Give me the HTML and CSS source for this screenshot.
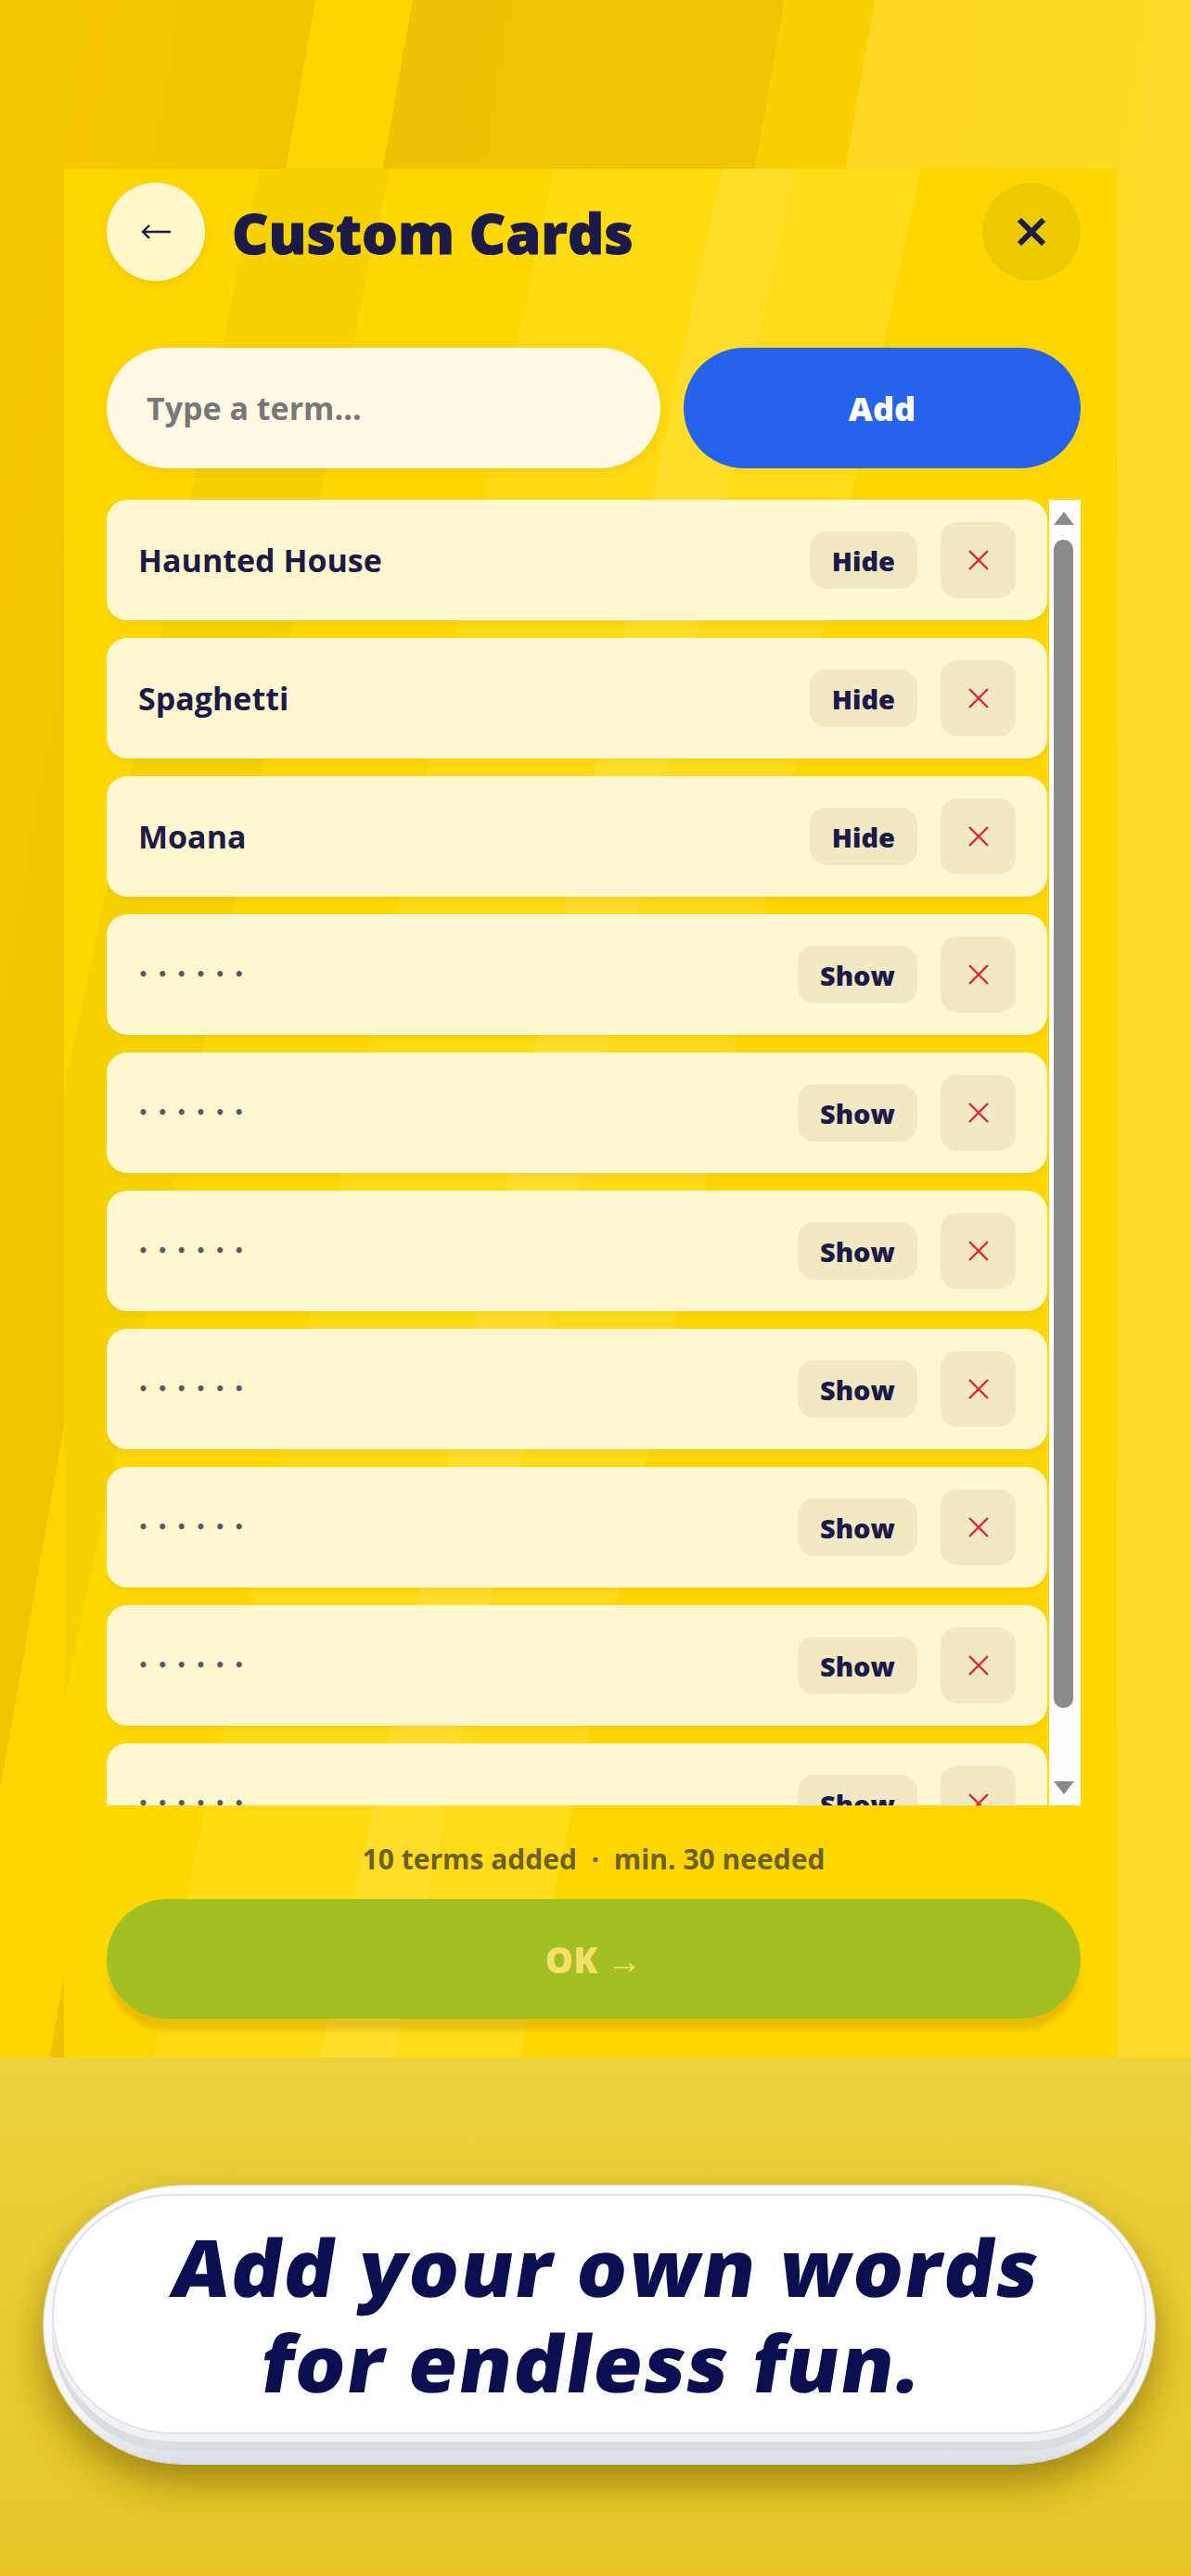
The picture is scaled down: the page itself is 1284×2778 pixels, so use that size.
FILE: index.html
```
<!DOCTYPE html>
<html lang="en">
<head>
  <meta charset="UTF-8" />
  <meta name="viewport" content="width=device-width, initial-scale=1.0"/>
  <title>Custom Cards</title>
  <link rel="stylesheet" href="styles.css">
</head>
<body>
  <section class="shot">
    <div class="panel">
      <header class="panel-head">
        <button class="round-btn back-btn" title="Back">
          <svg width="34" height="16" viewBox="0 0 34 16"><path d="M33 8H3M10 1L3 8l7 7" fill="none" stroke="#1c1b47" stroke-width="2.4"/></svg>
        </button>
        <h1 class="title">Custom Cards</h1>
        <button class="round-btn close-btn" title="Close">
          <svg width="34" height="34" viewBox="0 0 34 34"><path d="M4 4l26 26M30 4L4 30" stroke="#1c1b47" stroke-width="6"/></svg>
        </button>
      </header>

      <form class="add-row" autocomplete="off">
        <input class="term-input" type="text" placeholder="Type a term...">
        <button type="button" class="add-btn">Add</button>
      </form>

      <div class="list-wrap">
        <ul class="term-list">
          <li class="term-row"><span class="term-text">Haunted House</span><button class="toggle-btn">Hide</button><button class="del-btn"><svg width="24" height="24" viewBox="0 0 24 24"><path d="M2 2l20 20M22 2L2 22" stroke="#e0262b" stroke-width="2.4"/></svg></button></li>
          <li class="term-row"><span class="term-text">Spaghetti</span><button class="toggle-btn">Hide</button><button class="del-btn"><svg width="24" height="24" viewBox="0 0 24 24"><path d="M2 2l20 20M22 2L2 22" stroke="#e0262b" stroke-width="2.4"/></svg></button></li>
          <li class="term-row"><span class="term-text">Moana</span><button class="toggle-btn">Hide</button><button class="del-btn"><svg width="24" height="24" viewBox="0 0 24 24"><path d="M2 2l20 20M22 2L2 22" stroke="#e0262b" stroke-width="2.4"/></svg></button></li>
          <li class="term-row"><span class="term-text hidden">••••••</span><button class="toggle-btn">Show</button><button class="del-btn"><svg width="24" height="24" viewBox="0 0 24 24"><path d="M2 2l20 20M22 2L2 22" stroke="#e0262b" stroke-width="2.4"/></svg></button></li>
          <li class="term-row"><span class="term-text hidden">••••••</span><button class="toggle-btn">Show</button><button class="del-btn"><svg width="24" height="24" viewBox="0 0 24 24"><path d="M2 2l20 20M22 2L2 22" stroke="#e0262b" stroke-width="2.4"/></svg></button></li>
          <li class="term-row"><span class="term-text hidden">••••••</span><button class="toggle-btn">Show</button><button class="del-btn"><svg width="24" height="24" viewBox="0 0 24 24"><path d="M2 2l20 20M22 2L2 22" stroke="#e0262b" stroke-width="2.4"/></svg></button></li>
          <li class="term-row"><span class="term-text hidden">••••••</span><button class="toggle-btn">Show</button><button class="del-btn"><svg width="24" height="24" viewBox="0 0 24 24"><path d="M2 2l20 20M22 2L2 22" stroke="#e0262b" stroke-width="2.4"/></svg></button></li>
          <li class="term-row"><span class="term-text hidden">••••••</span><button class="toggle-btn">Show</button><button class="del-btn"><svg width="24" height="24" viewBox="0 0 24 24"><path d="M2 2l20 20M22 2L2 22" stroke="#e0262b" stroke-width="2.4"/></svg></button></li>
          <li class="term-row"><span class="term-text hidden">••••••</span><button class="toggle-btn">Show</button><button class="del-btn"><svg width="24" height="24" viewBox="0 0 24 24"><path d="M2 2l20 20M22 2L2 22" stroke="#e0262b" stroke-width="2.4"/></svg></button></li>
          <li class="term-row"><span class="term-text hidden">••••••</span><button class="toggle-btn">Show</button><button class="del-btn"><svg width="24" height="24" viewBox="0 0 24 24"><path d="M2 2l20 20M22 2L2 22" stroke="#e0262b" stroke-width="2.4"/></svg></button></li>
        </ul>
        <div class="scrollbar">
          <span class="sb-arrow up"></span>
          <span class="sb-thumb"></span>
          <span class="sb-arrow down"></span>
        </div>
      </div>

      <p class="count">10 terms added &nbsp;·&nbsp; min. 30 needed</p>
      <button class="ok-btn">OK →</button>
    </div>
  </section>

  <section class="promo">
    <div class="plate">
      <div class="plate-face">
        <p class="promo-text">Add your own words<br>for endless fun.</p>
      </div>
    </div>
  </section>
</body>
</html>
```

FILE: styles.css
```
body {
  margin: 0;
  width: 1284px;
  font-family: 'Open Sans', 'Noto Sans', sans-serif;
  color: #1c1b47;
}
button {
  font-family: inherit;
  border: none;
  cursor: pointer;
}

/* app screenshot area */
.shot {
  padding: 182px 80px 0 69px;
  background: linear-gradient(100deg,
    #f6c600 0, #f4c300 335px,
    #fdd600 335px, #fdd600 438px,
    #eec305 438px, #efc506 833px,
    #f9d000 833px, #f9d000 929px,
    #fcd823 929px, #fdda2c 1500px, #fcd82a 1700px);
}
.panel {
  display: flex;
  flex-direction: column;
  padding: 15px 39px 42px 46px;
  background: linear-gradient(102deg,
    #ffd800 0, #ffd800 206px,
    #f6d300 206px, #f6d300 344px,
    #ffd800 344px, #ffd800 517px,
    #ffdb14 517px, #ffdb14 694px,
    #ffde2a 694px, #ffde2a 771px,
    #ffdb1a 771px, #ffdb1a 904px,
    #ffd700 904px, #ffd700 1500px);
}
.panel-head {
  display: flex;
  align-items: center;
  height: 106px;
}
.round-btn {
  width: 106px;
  height: 106px;
  border-radius: 50%;
  display: flex;
  align-items: center;
  justify-content: center;
  padding: 0;
  flex-shrink: 0;
}
.back-btn {
  background: #fff6c8;
  box-shadow: 0 4px 12px rgba(160, 120, 0, 0.18);
}
.close-btn {
  background: #ecc900;
  margin-left: auto;
}
.title {
  margin: 0 0 0 29px;
  font-size: 61px;
  font-weight: 800;
  line-height: 1;
  color: #1c1b47;
  -webkit-text-stroke: 1px #1c1b47;
}

.add-row {
  display: flex;
  gap: 25px;
  margin-top: 72px;
  height: 130px;
}
.term-input {
  flex: 1;
  min-width: 0;
  border: none;
  border-radius: 65px;
  background: #fff9e3;
  padding: 0 30px 0 43px;
  font-family: inherit;
  font-size: 34px;
  font-weight: 700;
  color: #1c1b47;
  outline: none;
  box-shadow: 0 4px 12px rgba(160, 120, 0, 0.15);
}
.term-input::placeholder {
  color: #777777;
}
.add-btn {
  width: 428px;
  border-radius: 65px;
  background: #2563eb;
  color: #fff;
  font-size: 36px;
  font-weight: 800;
}

/* list + scrollbar */
.list-wrap {
  display: flex;
  gap: 2px;
  height: 1408px;
  margin-top: 34px;
}
.term-list {
  flex: 1;
  list-style: none;
  margin: 0;
  padding: 0;
  overflow: hidden;
  display: flex;
  flex-direction: column;
  gap: 19px;
}
.scrollbar {
  width: 34px;
  flex-shrink: 0;
  background: #fdfdfd;
  display: flex;
  flex-direction: column;
  padding: 13px 0 0 5px;
  box-sizing: border-box;
}
.sb-arrow {
  width: 0;
  height: 0;
  border-left: 11px solid transparent;
  border-right: 11px solid transparent;
}
.sb-arrow.up {
  border-bottom: 14px solid #8a8a8a;
}
.sb-arrow.down {
  margin-top: 79px;
  border-top: 14px solid #8a8a8a;
}
.sb-thumb {
  margin-top: 16px;
  width: 21px;
  height: 1260px;
  border-radius: 11px;
  background: #8a8a8a;
}
.term-row {
  flex-shrink: 0;
  display: flex;
  align-items: center;
  gap: 25px;
  height: 130px;
  padding: 0 34px;
  box-sizing: border-box;
  background: #fff7cf;
  border-radius: 22px;
  box-shadow: 0 4px 8px rgba(170, 130, 0, 0.12);
}
.term-text {
  flex: 1;
  font-size: 34px;
  font-weight: 700;
  color: #1c1b47;
}
.term-text.hidden {
  font-family: 'DejaVu Sans', sans-serif;
  font-size: 17px;
  letter-spacing: 9.8px;
  color: #555868;
}
.toggle-btn {
  height: 62px;
  padding: 0 24px;
  border-radius: 18px;
  background: #f1e8c4;
  color: #1c1b47;
  font-size: 29px;
  font-weight: 800;
}
.del-btn {
  width: 81px;
  height: 82px;
  border-radius: 18px;
  background: #f1e8c4;
  display: flex;
  align-items: center;
  justify-content: center;
  padding: 0;
}

/* footer */
.count {
  margin: 38px 0 0 0;
  line-height: 40px;
  text-align: center;
  font-size: 30px;
  font-weight: 700;
  color: #6d6024;
}
.ok-btn {
  margin-top: 23px;
  height: 129px;
  border-radius: 65px;
  background: #a4bf22;
  color: #f6df6a;
  font-size: 38px;
  font-weight: 800;
  box-shadow: 0 14px 6px -2px rgba(190, 140, 0, 0.35);
}

/* promo caption */
.promo {
  height: 559px;
  padding: 138px 39px 0 47px;
  box-sizing: border-box;
  background: linear-gradient(#ebd23f, #e9cb30 50%, #e7c424);
}
.plate {
  height: 300px;
  box-sizing: border-box;
  padding: 9px 9px 32px 9px;
  border-radius: 150px;
  background: linear-gradient(#fdfdfe 0, #f5f6f8 80%, #dedfe5 100%);
  box-shadow: 0 0 0 1px #d8d9e0, 0 20px 40px rgba(90, 70, 0, 0.5);
}
.plate-face {
  height: 100%;
  box-sizing: border-box;
  border-radius: 140px;
  border: 2px solid #e1e2e9;
  background: #fff;
  display: flex;
  align-items: center;
  justify-content: center;
  box-shadow: 0 8px 0 #f0f1f4, 0 18px 0 #dcdde3;
}
.promo-text {
  margin: 0;
  text-align: center;
  font-size: 85px;
  line-height: 103px;
  font-weight: 800;
  letter-spacing: 2px;
  color: #0a0f4f;
  transform: skewX(-9deg);
}
```
